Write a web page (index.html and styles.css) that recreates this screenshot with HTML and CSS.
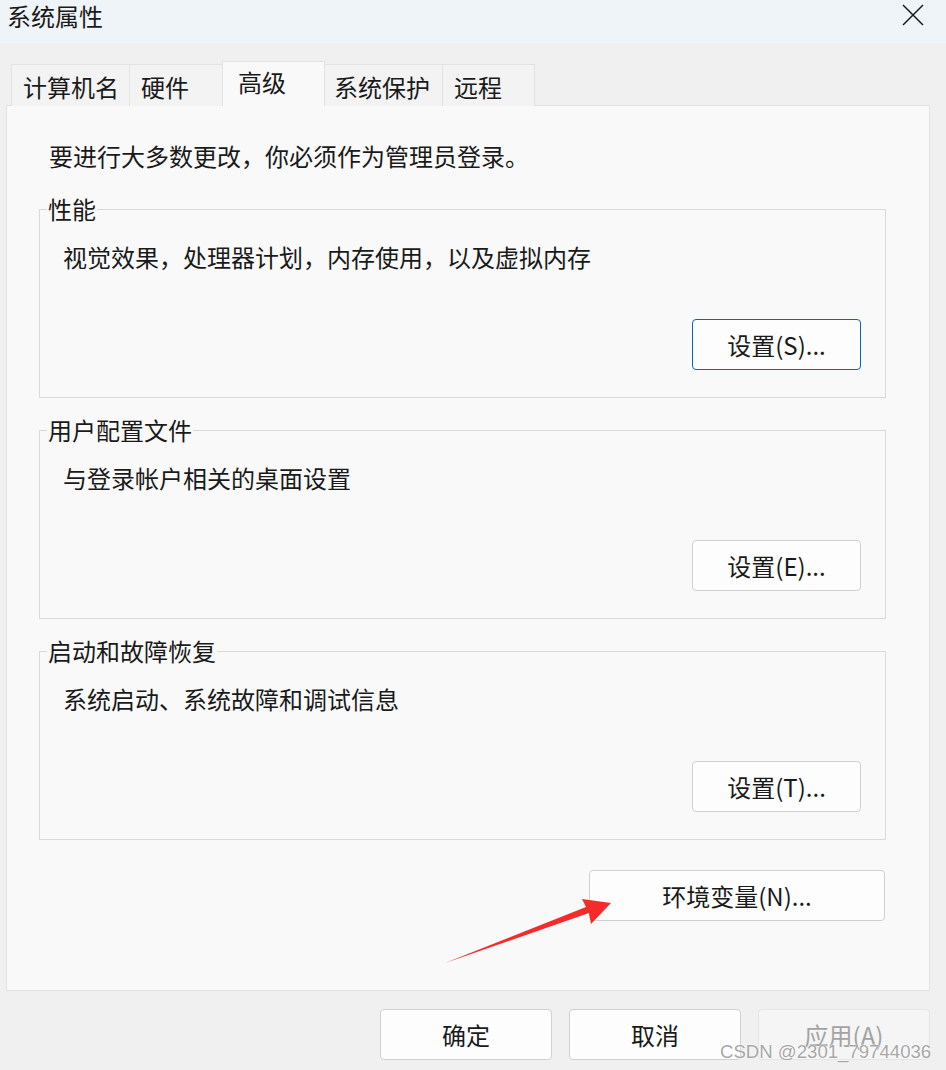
FILE: index.html
```html
<!DOCTYPE html>
<html lang="zh-CN">
<head>
<meta charset="utf-8">
<title>系统属性</title>
<link rel="stylesheet" href="styles.css">
</head>
<body>
<div class="window">
  <header class="titlebar">
    <span class="title">系统属性</span>
    <span class="close">
      <svg width="22" height="22" viewBox="0 0 22 22"><path d="M1 1 L21 21 M21 1 L1 21" stroke="#1a1a1a" stroke-width="1.5" fill="none"/></svg>
    </span>
  </header>

  <nav class="tabs">
    <div class="tab">计算机名</div>
    <div class="tab">硬件</div>
    <div class="tab active">高级</div>
    <div class="tab">系统保护</div>
    <div class="tab last">远程</div>
  </nav>

  <section class="panel">
    <p class="intro">要进行大多数更改，你必须作为管理员登录。</p>

    <fieldset class="group">
      <legend>性能</legend>
      <p class="desc">视觉效果，处理器计划，内存使用，以及虚拟内存</p>
      <div class="row"><button class="btn focus">设置(S)...</button></div>
    </fieldset>

    <fieldset class="group">
      <legend>用户配置文件</legend>
      <p class="desc">与登录帐户相关的桌面设置</p>
      <div class="row"><button class="btn">设置(E)...</button></div>
    </fieldset>

    <fieldset class="group">
      <legend>启动和故障恢复</legend>
      <p class="desc">系统启动、系统故障和调试信息</p>
      <div class="row"><button class="btn">设置(T)...</button></div>
    </fieldset>

    <div class="envrow"><button class="btn env">环境变量(N)...</button></div>
  </section>

  <footer class="footer">
    <button class="btn foot">确定</button>
    <button class="btn foot">取消</button>
    <button class="btn foot disabled">应用(A)</button>
  </footer>

  <svg class="arrow" width="946" height="1070" viewBox="0 0 946 1070">
    <polygon points="445,963 586,907 582,899 611,903 591,924 589,913" fill="#f52a2a"/>
  </svg>
  <div class="watermark">CSDN @2301_79744036</div>
</div>
</body>
</html>
```

FILE: styles.css
```css
* { box-sizing: border-box; }
html, body {
  margin: 0;
  padding: 0;
  background: #f0f0f0;
}
body {
  font-family: "Noto Sans CJK SC", "Noto Sans", sans-serif;
  font-size: 24px;
  color: #1a1a1a;
}
.window {
  position: relative;
  width: 946px;
  height: 1070px;
  overflow: hidden;
}
.titlebar {
  height: 43px;
  background: #eff4f9;
  display: flex;
  justify-content: space-between;
  align-items: flex-start;
  padding-left: 7px;
  padding-right: 22px;
}
.title {
  padding-top: 1px;
  line-height: 30px;
}
.close {
  margin-top: 4px;
  width: 22px;
  height: 22px;
  display: block;
}
.close svg { display: block; }

.tabs {
  display: flex;
  align-items: flex-end;
  height: 45px;
  margin: 18px 0 -1px 11px;
}
.tab {
  height: 42px;
  min-width: 93px;
  padding: 6px 10px 0 11px;
  line-height: 32px;
  background: #f3f3f3;
  border-top: 1px solid #e3e3e3;
  border-left: 1px solid #e3e3e3;
  white-space: nowrap;
}
.tab.last { border-right: 1px solid #e3e3e3; }
.tab.active {
  position: relative;
  z-index: 1;
  height: 45px;
  width: 103px;
  padding: 4px 0 0 15px;
  background: #f9f9f9;
  border-right: 1px solid #e3e3e3;
}
.tab.active + .tab {
  border-left: none;
  padding-left: 9px;
  padding-right: 12px;
}

.panel {
  width: 924px;
  height: 886px;
  margin-left: 6px;
  background: #f9f9f9;
  border: 1px solid #e2e2e2;
  padding: 34px 43px 0 32px;
}
.intro {
  margin: 0 0 21px 10px;
  line-height: 32px;
}
.group {
  margin: 0 0 16px 0;
  border: 1px solid #dadada;
  padding: 16px 24px 27px 23px;
  min-width: 0;
}
.group legend {
  margin-left: -16px;
  padding: 0 1px;
  line-height: 32px;
}
.desc {
  margin: 0;
  line-height: 32px;
}
.row {
  display: flex;
  justify-content: flex-end;
  margin-top: 46px;
}
.btn {
  font-family: "Noto Sans CJK SC", "Noto Sans", sans-serif;
  font-size: 24px;
  color: #1a1a1a;
  background: #fdfdfd;
  border: 1px solid #d0d0d0;
  border-radius: 4px;
  height: 51px;
  width: 169px;
  padding: 0;
  line-height: 48px;
}
.btn.focus {
  border-color: #0067c0;
}
.envrow {
  display: flex;
  justify-content: flex-end;
  margin-top: 30px;
  padding-right: 1px;
}
.btn.env { width: 296px; }

.footer {
  display: flex;
  justify-content: flex-end;
  gap: 17px;
  margin-top: 18px;
  padding-right: 16px;
}
.btn.foot { width: 172px; }
.btn.disabled {
  background: #f5f5f5;
  border-color: #e5e5e5;
  color: #a3a3a3;
}

.arrow {
  position: absolute;
  left: 0;
  top: 0;
  pointer-events: none;
}
.watermark {
  position: absolute;
  left: 720px;
  top: 1040px;
  font-family: "Liberation Sans", Arial, sans-serif;
  font-size: 18.6px;
  line-height: 24px;
  color: rgba(150, 150, 150, 0.85);
  text-shadow: 0 0 2px #ffffff, 0 0 1px #ffffff;
  white-space: nowrap;
}
```
